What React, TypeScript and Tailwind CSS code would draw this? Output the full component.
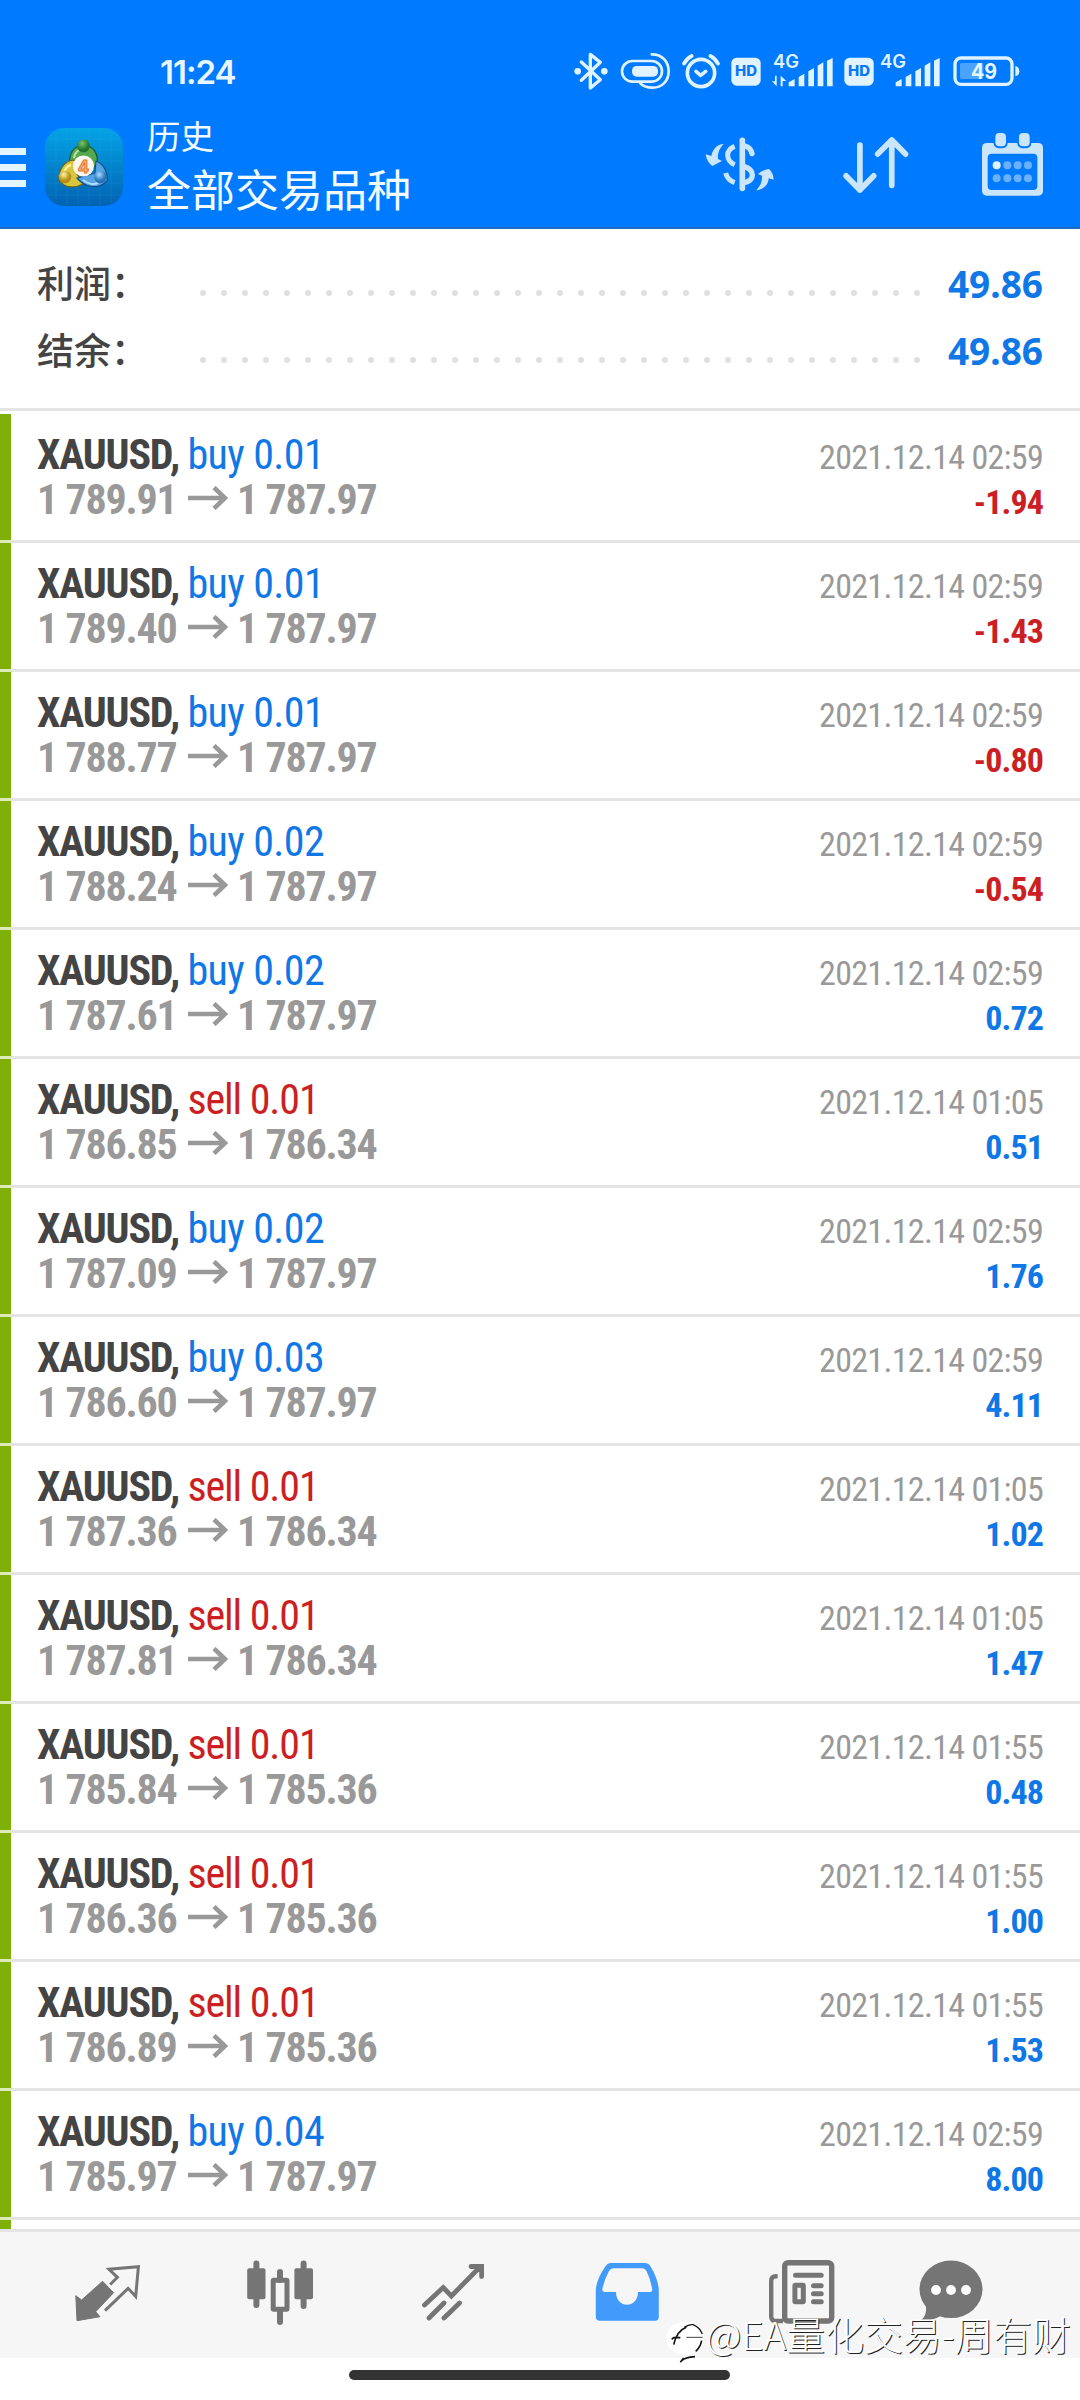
import { ReactNode } from "react";
import clsx from "clsx";

interface Deal {
  side: "buy" | "sell";
  volume: string;
  open: string;
  close: string;
  time: string;
  profit: string;
}

const DEALS: Deal[] = [
  { side: "buy", volume: "0.01", open: "1 789.91", close: "1 787.97", time: "2021.12.14 02:59", profit: "-1.94" },
  { side: "buy", volume: "0.01", open: "1 789.40", close: "1 787.97", time: "2021.12.14 02:59", profit: "-1.43" },
  { side: "buy", volume: "0.01", open: "1 788.77", close: "1 787.97", time: "2021.12.14 02:59", profit: "-0.80" },
  { side: "buy", volume: "0.02", open: "1 788.24", close: "1 787.97", time: "2021.12.14 02:59", profit: "-0.54" },
  { side: "buy", volume: "0.02", open: "1 787.61", close: "1 787.97", time: "2021.12.14 02:59", profit: "0.72" },
  { side: "sell", volume: "0.01", open: "1 786.85", close: "1 786.34", time: "2021.12.14 01:05", profit: "0.51" },
  { side: "buy", volume: "0.02", open: "1 787.09", close: "1 787.97", time: "2021.12.14 02:59", profit: "1.76" },
  { side: "buy", volume: "0.03", open: "1 786.60", close: "1 787.97", time: "2021.12.14 02:59", profit: "4.11" },
  { side: "sell", volume: "0.01", open: "1 787.36", close: "1 786.34", time: "2021.12.14 01:05", profit: "1.02" },
  { side: "sell", volume: "0.01", open: "1 787.81", close: "1 786.34", time: "2021.12.14 01:05", profit: "1.47" },
  { side: "sell", volume: "0.01", open: "1 785.84", close: "1 785.36", time: "2021.12.14 01:55", profit: "0.48" },
  { side: "sell", volume: "0.01", open: "1 786.36", close: "1 785.36", time: "2021.12.14 01:55", profit: "1.00" },
  { side: "sell", volume: "0.01", open: "1 786.89", close: "1 785.36", time: "2021.12.14 01:55", profit: "1.53" },
  { side: "buy", volume: "0.04", open: "1 785.97", close: "1 787.97", time: "2021.12.14 02:59", profit: "8.00" },
];

function HdBadge() {
  return (
    <svg className="w-[30px] h-[29px]" viewBox="0 0 90 87">
      <rect x="1" y="2" width="88" height="84" rx="16" fill="#e0f3ff" />
      <text x="45" y="58" textAnchor="middle" fontSize="42" fontWeight="800" fill="#0a78f5" fontFamily="Inter, sans-serif" textLength="66" lengthAdjust="spacingAndGlyphs">
        HD
      </text>
    </svg>
  );
}

function StatusBar() {
  return (
    <div className="h-[112px] pt-[50px] pl-[160px] pr-[60px] flex items-start justify-between">
      <span className="mt-[1px] w-[80px] text-[33px] leading-[42px] font-semibold text-[#e8f7ff] font-['Inter',sans-serif] tracking-[-1px]">11:24</span>
      <div className="flex items-start text-[#e0f3ff]">
        {/* bluetooth */}
        <svg className="w-[34px] h-[38px] mt-[2px]" viewBox="47 37 102 114" fill="none" stroke="currentColor" strokeWidth="10" strokeLinejoin="round" strokeLinecap="round">
          <path d="M69 67 L126 120 L96 145 V44 L126 68 L69 122" />
          <circle cx="58" cy="95" r="10" fill="currentColor" stroke="none" />
          <circle cx="138" cy="95" r="10" fill="currentColor" stroke="none" />
        </svg>
        {/* NFC */}
        <svg className="ml-[12px] w-[51px] h-[38px] mt-[3px]" viewBox="184 40 153 114" fill="none" stroke="currentColor" strokeWidth="8" strokeLinecap="butt">
          <rect x="190" y="64" width="120" height="62" rx="31" />
          <rect x="220" y="79" width="78" height="32" rx="14" fill="currentColor" stroke="none" />
          <path d="M276 44 C310 42 330 66 330 95 C330 126 308 144 282 144 C264 144 252 140 243 129" />
        </svg>
        {/* alarm */}
        <svg className="ml-[11px] w-[38px] h-[36px] mt-[4px]" viewBox="369 41 114 108" fill="none" stroke="currentColor" strokeWidth="11" strokeLinecap="round" strokeLinejoin="round">
          <circle cx="426" cy="98" r="41" />
          <path d="M411 93 L425 105 L440 93" />
          <path d="M375 70 Q383 54 398 47 M454 47 Q469 54 477 70" />
        </svg>
        <div className="ml-[11px] mt-[7px]"><HdBadge /></div>
        <svg className="ml-[10px] w-[63px] h-[41px] mt-[-3px]" viewBox="637 20 189 123" fill="currentColor">
          <text x="643" y="83" fontSize="54" fontWeight="600" fontFamily="Inter, sans-serif" textLength="78" lengthAdjust="spacingAndGlyphs">4G</text>
          <path d="M654 106 V138 L640 123 H649 V106 Z M666 138 V106 L683 122 H672 V138 Z" />
          <path d="M690 138 V126 L708 116 V138 Z M720 138 V110 L737 100 V138 Z M749 138 V93 L766 83 V138 Z M777 138 V76 L794 66 V138 Z M805 138 V61 L822 53 V138 Z" />
        </svg>
        <div className="ml-[10px] mt-[7px]"><HdBadge /></div>
        <svg className="ml-[5px] w-[62px] h-[41px] mt-[-3px]" viewBox="958 20 186 123" fill="currentColor">
          <text x="961" y="83" fontSize="54" fontWeight="600" fontFamily="Inter, sans-serif" textLength="78" lengthAdjust="spacingAndGlyphs">4G</text>
          <path d="M1008 138 V126 L1026 116 V138 Z M1038 138 V110 L1055 100 V138 Z M1067 138 V93 L1084 83 V138 Z M1095 138 V76 L1112 66 V138 Z M1123 138 V61 L1140 53 V138 Z" />
        </svg>
        {/* battery */}
        <svg className="ml-[12px] w-[67px] h-[31px] mt-[6px]" viewBox="1178 49 201 93" fill="none">
          <rect x="1184" y="55" width="171" height="79" rx="18" stroke="currentColor" strokeWidth="10" />
          <rect x="1199" y="70" width="70" height="48" rx="6" fill="#4aa3ff" />
          <path d="M1365 79 Q1377 82 1377 95 Q1377 108 1365 110 Z" fill="currentColor" />
          <text x="1271" y="117" textAnchor="middle" fontSize="64" fontWeight="700" fill="#e8f7ff" fontFamily="Inter, sans-serif" textLength="78" lengthAdjust="spacingAndGlyphs">49</text>
        </svg>
      </div>
    </div>
  );
}

function AppLogo() {
  return (
    <svg className="ml-[18px] mt-[15px] w-[80px] h-[80px]" viewBox="0 0 80 80">
      <defs>
        <linearGradient id="tile" x1="0" y1="0" x2="0" y2="1">
          <stop offset="0" stopColor="#05a3e6" />
          <stop offset="0.5" stopColor="#0283cb" />
          <stop offset="1" stopColor="#0262b2" />
        </linearGradient>
        <radialGradient id="green" cx="0.4" cy="0.3"><stop offset="0" stopColor="#7ac46a" /><stop offset="1" stopColor="#23762c" /></radialGradient>
        <radialGradient id="gold" cx="0.4" cy="0.3"><stop offset="0" stopColor="#fff3a0" /><stop offset="1" stopColor="#b48d12" /></radialGradient>
        <radialGradient id="sky" cx="0.4" cy="0.3"><stop offset="0" stopColor="#a8dcff" /><stop offset="1" stopColor="#2673b8" /></radialGradient>
      </defs>
      <rect x="1" y="1" width="78" height="78" rx="19" fill="url(#tile)" />
      <path d="M12 5V75M23 2V78M34 1V79M45 1V79M56 1V79M67 4V76M4 12H76M1 23H79M1 34H79M1 45H79M1 56H79M4 68H76" stroke="#35b4ee" strokeWidth="0.6" opacity="0.25" />
      <path d="M26 39 C24 26 30 19 39 18 C49 18 55 27 53 38 L47 41 L41 30 L30 37 Z" fill="#55a850" stroke="#1b5a2c" strokeWidth="1.2" />
      <path d="M29 33 C20 34 14 44 15 53 C21 62 32 61 39 57 L33 47 L35 35 Z" fill="#d8c63e" stroke="#6a6417" strokeWidth="1.2" />
      <path d="M52 34 C60 37 64 46 63 54 C56 62 42 62 33 51 L41 49 L51 46 Z" fill="#55a5e6" stroke="#164f8e" strokeWidth="1.2" />
      <path d="M30 31 C31 25 35 22 40 22" fill="none" stroke="#b9e3a8" strokeWidth="2" />
      <path d="M20 48 C20 43 23 39 27 38" fill="none" stroke="#fbf1a0" strokeWidth="2.5" />
      <path d="M39 53 C44 57 50 58 54 56" fill="none" stroke="#b5e0ff" strokeWidth="2" />
      <circle cx="39.5" cy="19" r="6.5" fill="url(#green)" />
      <circle cx="21" cy="50" r="6.3" fill="url(#gold)" />
      <circle cx="56.5" cy="50" r="6.3" fill="url(#sky)" />
      <circle cx="39.5" cy="39" r="10.5" fill="#fbf6f1" />
      <text x="39.5" y="45.5" textAnchor="middle" fontSize="17" fontWeight="700" fill="#f3b27c" stroke="#e8792c" strokeWidth="1" fontFamily="Inter, sans-serif">4</text>
    </svg>
  );
}

function Header() {
  return (
    <header className="h-[229px] bg-[#007aff] border-b-2 border-[#1c6fc8]">
      <StatusBar />
      <div className="flex items-start">
        <div className="mt-[36px] w-[26px] flex flex-col gap-[9px]">
          <span className="h-[7px] bg-[#e3f6ff]" />
          <span className="h-[7px] bg-[#e3f6ff]" />
          <span className="h-[7px] bg-[#e3f6ff]" />
        </div>
        <AppLogo />
        <div className="ml-[23px] text-[#f2fbff] font-['Noto_Sans_CJK_SC',sans-serif]">
          <div className="mt-[3px] text-[33.5px] leading-[40px]">历史</div>
          <div className="mt-[7px] text-[44px] leading-[52px]">全部交易品种</div>
        </div>
        <div className="ml-auto mr-[36px] flex items-start text-[#cbe5fb]">
          {/* deposit / withdraw */}
          <svg className="mt-[25px] w-[70px] h-[55px]" viewBox="436 291 210 165" fill="none" stroke="currentColor">
            <path d="M548 301 V445" strokeWidth="17" strokeLinecap="round" />
            <path d="M525 319 Q504 327 504 346 Q505 365 525 374" strokeWidth="15" />
            <path d="M498 399 Q503 420 525 428" strokeWidth="15" />
            <path d="M556 318 Q573 322 577 341" strokeWidth="16" strokeLinecap="round" />
            <path d="M554 380 Q578 387 578 406 Q577 423 554 428" strokeWidth="16" />
            <path d="M492 312 C475 313 460 323 455 348 L438 343 Q441 366 458 378 L487 363 L475 357 C473 340 480 324 492 312 Z" fill="currentColor" stroke="none" />
            <path d="M590 451 C610 447 626 438 627 415 L642 419 Q641 399 628 387 Q610 389 595 402 L607 407 C608 424 603 437 590 451 Z" fill="currentColor" stroke="none" />
          </svg>
          <svg className="ml-[67px] mt-[24px] w-[68px] h-[58px]" viewBox="849 290 200 173" fill="none" stroke="currentColor" strokeWidth="17" strokeLinecap="round" strokeLinejoin="round">
            <path d="M901 317 V451 M860 409 L901 451 L942 409" />
            <path d="M996 437 V302 M954 344 L996 302 L1037 344" />
          </svg>
          <svg className="ml-[71px] mt-[20px] w-[63px] h-[65px]" viewBox="1263 277 189 195">
            <rect x="1266" y="310" width="183" height="158" rx="14" fill="currentColor" />
            <rect x="1283" y="342" width="149" height="109" rx="12" fill="#007aff" />
            <rect x="1301" y="276" width="42" height="50" rx="15" fill="#007aff" />
            <rect x="1372" y="276" width="42" height="50" rx="15" fill="#007aff" />
            <rect x="1306" y="280" width="32" height="40" rx="12" fill="currentColor" />
            <rect x="1377" y="280" width="32" height="40" rx="12" fill="currentColor" />
            {[1310, 1342, 1373, 1404].map((x, i) => (
              <g key={x} fill="#69b1fb">
                <circle cx={x} cy="377" r="12" fill={i === 0 ? "#dff1ff" : "#69b1fb"} />
                <circle cx={x} cy="416" r="12" />
              </g>
            ))}
          </svg>
        </div>
      </div>
    </header>
  );
}

function SummaryRow({ label, value }: { label: string; value: string }) {
  return (
    <div className="h-[67px] flex items-start">
      <span className="mt-[-1px] w-[163px] text-[37px] leading-[67px] font-medium text-[#444] font-['Noto_Sans_CJK_SC',sans-serif]">{label}</span>
      <div className="mt-[40px] flex gap-[15px]">
        {Array.from({ length: 35 }, (_, i) => (
          <span key={i} className="size-[6px] rounded-full bg-[#e0e0e0]" />
        ))}
      </div>
      <span className="ml-auto text-[37px] leading-[67px] font-bold text-[#1078e6] font-['Noto_Sans',sans-serif]">{value}</span>
    </div>
  );
}

function DealRow({ deal }: { deal: Deal }) {
  return (
    <div className="h-[129px] flex flex-col">
      <div className="h-[126px] border-l-[11px] border-[#7fb007] pt-[18px] pl-[26px] pr-[37px] flex justify-between leading-[45px] font-['Roboto',sans-serif] [font-stretch:75%]">
        <div className="text-[42px] whitespace-nowrap">
          <div>
            <span className="font-bold text-[#444] tracking-[-1.2px]">XAUUSD, </span>
            <span className={deal.side === "buy" ? "text-[#1078e6] tracking-[-0.6px]" : "text-[#cc1f24] tracking-[-1.1px]"}>
              {deal.side} {deal.volume}
            </span>
          </div>
          <div className="flex font-bold text-[#999] tracking-[-1.2px]">
            <span className="w-[140px]">{deal.open}</span>
            <svg className="mt-[9px] ml-[10px] mr-[8px] w-[42px] h-[24px]" viewBox="0 0 42 24" fill="none" stroke="currentColor" strokeWidth="4.5">
              <path d="M1 12 H38 M27 1.5 L38 12 L27 22.5" />
            </svg>
            <span>{deal.close}</span>
          </div>
        </div>
        <div className="mt-[3px] text-[34px] text-right whitespace-nowrap">
          <div className="text-[#999] tracking-[-0.7px]">{deal.time}</div>
          <div className={clsx("font-bold tracking-[-0.9px]", deal.profit.startsWith("-") ? "text-[#cc1f24]" : "text-[#1078e6]")}>{deal.profit}</div>
        </div>
      </div>
      <div className="h-[3px] border-l-[11px] border-[#dcebb8] bg-[#e4e4e4]" />
    </div>
  );
}

function Tab({ className, viewBox, children }: { className: string; viewBox: string; children: ReactNode }) {
  return (
    <svg className={clsx("shrink-0", className)} viewBox={viewBox} fill="none" stroke="currentColor">
      {children}
    </svg>
  );
}

function TabBar() {
  return (
    <nav className="h-[129px] border-t-[3px] border-[#e4e4e4] bg-[#f6f6f6] pl-[70px] flex items-start text-[#757575]">
      {/* quotes */}
      <Tab className="mt-[28px] w-[74px] h-[66px]" viewBox="0 0 74 66">
        <path d="M32.6 21.3 L43.6 32.7 L25.7 51.7 L29.9 56.7 L7 60.7 L5.8 35.7 L11.6 40 Z" fill="currentColor" strokeWidth="1" strokeLinejoin="round" />
        <path d="M40.2 24.5 L47.4 17.3 L39 9.3 L68.4 6.7 L65.7 36.5 L58.1 28.3 L35 50.7" strokeWidth="3" />
      </Tab>
      {/* charts */}
      <Tab className="ml-[101px] mt-[26px] w-[70px] h-[70px]" viewBox="0 0 70 70">
        <path d="M11.4 5.5 V47 M58.6 5.5 V48 M35 14 V22 M35 53 V64" strokeWidth="6" strokeLinecap="round" />
        <rect x="2.2" y="10.3" width="18.3" height="31" rx="2" fill="currentColor" stroke="none" />
        <rect x="49.4" y="10.3" width="18.6" height="31" rx="2" fill="currentColor" stroke="none" />
        <rect x="28.2" y="22.3" width="13.8" height="29" rx="0.5" strokeWidth="5" />
      </Tab>
      {/* trade */}
      <Tab className="ml-[103px] mt-[30px] w-[70px] h-[64px]" viewBox="0 0 70 64">
        <path d="M6.5 43 L25.2 25.5 L33.4 34 L62.5 4.5 M53 4.5 H63.6 V14.5 M11 56 L26 41 M26 56 L41.5 41" strokeWidth="4.8" strokeLinecap="round" />
      </Tab>
      {/* history, active */}
      <Tab className="ml-[107px] mt-[30px] w-[65px] h-[60px] text-[#429bfb]" viewBox="0 0 65 60">
        <path fillRule="evenodd" fill="currentColor" stroke="none" d="M15.5 1 H50.5 Q53.5 1 55 3.5 Q63.8 18 63.8 29 V54.7 Q63.8 58.7 60 58.7 H4.8 Q0.8 58.7 0.8 54.7 V29 Q0.8 18 11 3.5 Q12.5 1 15.5 1 Z M18.5 6.3 Q15.5 6.3 14 9 Q9.5 17 7.3 27 Q6.8 30 9.5 30 H21 C21 47 43 47 43 30 H55 Q57.8 30 57.2 27 Q55.5 17 51.5 9 Q50 6.3 47.5 6.3 Z" />
      </Tab>
      {/* news */}
      <Tab className="ml-[108px] mt-[27px] w-[68px] h-[66px]" viewBox="0 0 68 66">
        <rect x="16.7" y="3.7" width="47" height="58.3" rx="3.5" strokeWidth="5.4" />
        <path d="M9.6 17.2 H8 Q3.2 17.2 3.2 22 V57.5 Q3.2 62 8 62 H15" strokeWidth="4.4" />
        <path d="M27.5 16.3 H53.2 M45.5 26.7 H53.2 M45.5 34.7 H53.2 M45.5 42.7 H53.2" strokeWidth="5" strokeLinecap="round" />
        <rect x="26.9" y="26.3" width="8.4" height="16.4" rx="0.5" strokeWidth="5" />
      </Tab>
      {/* messages */}
      <Tab className="ml-[82px] mt-[27px] w-[66px] h-[64px]" viewBox="0 0 66 64">
        <ellipse cx="33" cy="30.3" rx="31.5" ry="28.8" fill="currentColor" stroke="none" />
        <path d="M8 47 Q9 57 2.5 61.5 Q15 62.5 24 56 Z" fill="currentColor" stroke="none" />
        <circle cx="18" cy="31" r="4.9" fill="#fff" stroke="none" />
        <circle cx="33" cy="31" r="4.9" fill="#fff" stroke="none" />
        <circle cx="48" cy="31" r="4.9" fill="#fff" stroke="none" />
      </Tab>
    </nav>
  );
}

function Watermark() {
  return (
    <div className="absolute left-[665px] top-[2307px] flex items-start whitespace-nowrap">
      <svg className="w-[41px] h-[44px] mt-[13px]" viewBox="48 60 123 132" fill="none">
        <ellipse cx="108" cy="115" rx="57" ry="50" fill="#fff" />
        <path d="M74 134 Q84 92 112 82 M68 118 L74 113 H94 M158 122 Q154 142 140 154 M98 182 Q108 172 138 170 M94 187 L104 174" stroke="#111" strokeWidth="5" />
        <path d="M106 82 Q120 72 132 74 Q152 82 160 102" stroke="#111" strokeWidth="4" />
        <path d="M112 112 H161" stroke="#444" strokeWidth="3" />
      </svg>
      <span className="text-[38.8px] leading-[52px] font-light text-white font-['Noto_Sans_CJK_SC',sans-serif] [text-shadow:1px_1px_0_#222]">
        @EA量化交易-周有财
      </span>
    </div>
  );
}

export default function App() {
  return (
    <div className="relative w-[1080px] h-[2400px] overflow-hidden bg-white">
      <Header />
      <section className="h-[182px] border-b-[3px] border-[#e4e4e4] pt-[21px] pl-[37px] pr-[37px]">
        <SummaryRow label="利润：" value="49.86" />
        <SummaryRow label="结余：" value="49.86" />
      </section>
      <main className="pt-[3px] h-[1818px] overflow-hidden">
        {DEALS.map((deal, i) => (
          <DealRow key={i} deal={deal} />
        ))}
        <div className="h-[9px] w-[11px] bg-[#7fb007]" />
      </main>
      <TabBar />
      <div className="mt-[12px] ml-[349px] w-[381px] h-[10px] rounded-full bg-[#333]" />
      <Watermark />
    </div>
  );
}
